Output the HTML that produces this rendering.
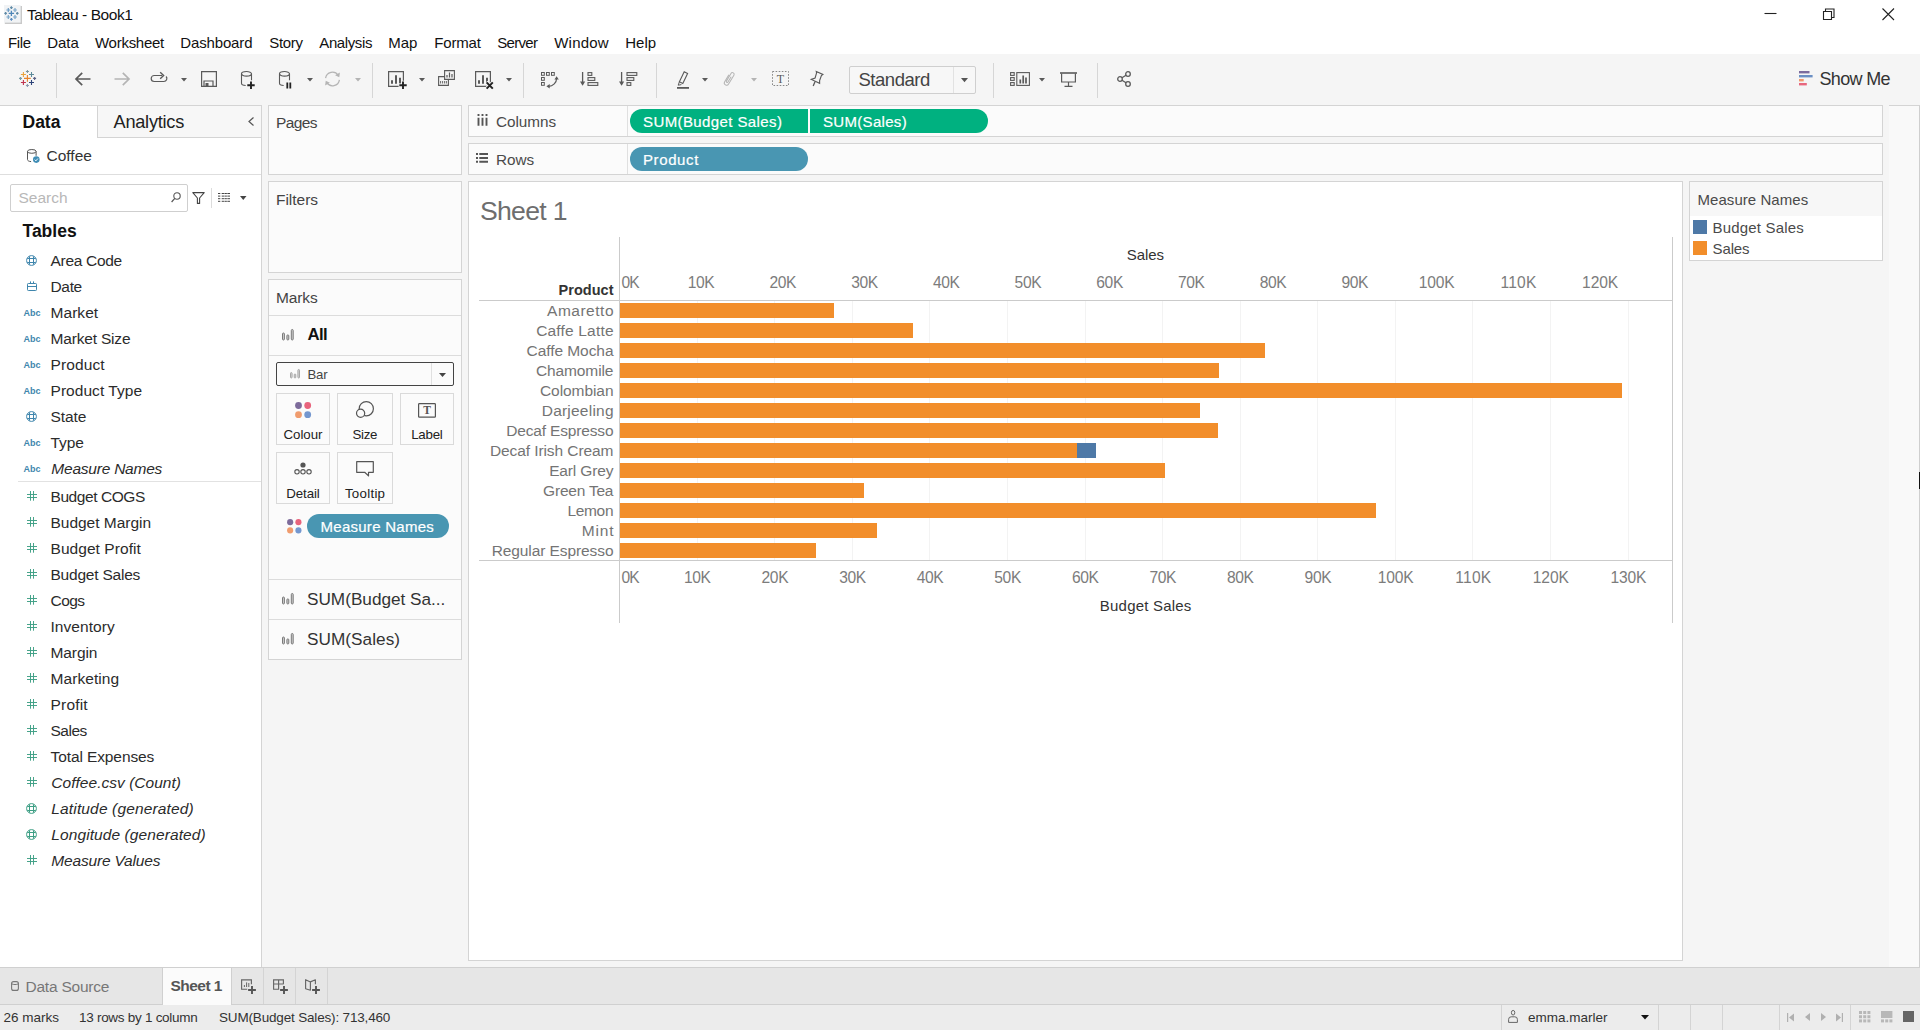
<!DOCTYPE html>
<html lang="en"><head><meta charset="utf-8"><title>Tableau - Book1</title>
<style>
*{box-sizing:border-box;margin:0;padding:0}
html,body{width:1920px;height:1030px;overflow:hidden}
body{position:relative;background:#f5f5f5;font-family:"Liberation Sans",sans-serif;color:#333}
.t{position:absolute;white-space:nowrap}
.b{position:absolute;display:block}
svg{overflow:visible}
</style></head><body>
<div class="b" style="left:0px;top:0px;width:1920px;height:54px;background:#fff;"></div>
<svg class="b" style="left:4px;top:5px;" width="19" height="19" viewBox="0 0 19 19"><rect x="0.8" y="1" width="17.2" height="18" fill="#c9c9c9"/><rect x="0" y="0" width="16.6" height="17.6" fill="#f1f3f5"/><path d="M4.7 8.4h5.4M7.4 5.7v5.4" stroke="#4f86b8" stroke-width="1.3"/><path d="M6.1 2.6h2.6M7.4 1.3v2.6" stroke="#5f8aa6" stroke-width="1.2"/><path d="M6.1 14.4h2.6M7.4 13.1v2.6" stroke="#5a8cc0" stroke-width="1.2"/><path d="M0.3 8.4h2.6M1.6 7.1v2.6" stroke="#5f8aa6" stroke-width="1.2"/><path d="M12.0 8.4h2.6M13.3 7.1v2.6" stroke="#5f8aa6" stroke-width="1.2"/><path d="M2.4 5h3.8M4.3 3.1v3.8" stroke="#6c9cc4" stroke-width="1.2"/><path d="M9.1 5h3.8M11 3.1v3.8" stroke="#7aa6c8" stroke-width="1.2"/><path d="M2.4 12h3.8M4.3 10.1v3.8" stroke="#7aa6c8" stroke-width="1.2"/><path d="M9.1 12h3.8M11 10.1v3.8" stroke="#7aa6c8" stroke-width="1.2"/></svg>
<div class="t" style="top:5px;line-height:20px;font-size:15.5px;color:#111;letter-spacing:-0.44px;left:27px;">Tableau - Book1</div>
<svg class="b" style="left:1764px;top:6px;" width="16" height="16" viewBox="0 0 16 16"><path d="M0.5 7.5h12" stroke="#222" stroke-width="1.1" fill="none"/></svg>
<svg class="b" style="left:1823px;top:8px;" width="14" height="14" viewBox="0 0 14 14"><path d="M0.5 3.5h8v8h-8z M2.5 3.5v-2.5h8.5v8.5h-2.5" stroke="#222" stroke-width="1.1" fill="none"/></svg>
<svg class="b" style="left:1882px;top:8px;" width="14" height="14" viewBox="0 0 14 14"><path d="M0.5 0.5l11.5 11.5M12 0.5l-11.5 11.5" stroke="#222" stroke-width="1.1" fill="none"/></svg>
<div class="t" style="top:33px;line-height:20px;font-size:15px;color:#111;letter-spacing:-0.37px;left:8px;">File</div>
<div class="t" style="top:33px;line-height:20px;font-size:15px;color:#111;letter-spacing:-0.07px;left:47.3px;">Data</div>
<div class="t" style="top:33px;line-height:20px;font-size:15px;color:#111;letter-spacing:-0.27px;left:95px;">Worksheet</div>
<div class="t" style="top:33px;line-height:20px;font-size:15px;color:#111;letter-spacing:-0.15px;left:180.3px;">Dashboard</div>
<div class="t" style="top:33px;line-height:20px;font-size:15px;color:#111;letter-spacing:-0.32px;left:269.3px;">Story</div>
<div class="t" style="top:33px;line-height:20px;font-size:15px;color:#111;letter-spacing:-0.39px;left:319.3px;">Analysis</div>
<div class="t" style="top:33px;line-height:20px;font-size:15px;color:#111;letter-spacing:-0.06px;left:388.3px;">Map</div>
<div class="t" style="top:33px;line-height:20px;font-size:15px;color:#111;letter-spacing:-0.19px;left:434.3px;">Format</div>
<div class="t" style="top:33px;line-height:20px;font-size:15px;color:#111;letter-spacing:-0.7px;left:497.3px;">Server</div>
<div class="t" style="top:33px;line-height:20px;font-size:15px;color:#111;letter-spacing:0.17px;left:554.3px;">Window</div>
<div class="t" style="top:33px;line-height:20px;font-size:15px;color:#111;letter-spacing:-0.04px;left:625.3px;">Help</div>
<div class="b" style="left:0px;top:54px;width:1920px;height:52px;background:#f5f5f5;"></div>
<div class="b" style="left:56px;top:63px;width:1px;height:35px;background:#d6d6d6;"></div>
<div class="b" style="left:372px;top:63px;width:1px;height:35px;background:#d6d6d6;"></div>
<div class="b" style="left:523px;top:63px;width:1px;height:35px;background:#d6d6d6;"></div>
<div class="b" style="left:656px;top:63px;width:1px;height:35px;background:#d6d6d6;"></div>
<div class="b" style="left:993px;top:63px;width:1px;height:35px;background:#d6d6d6;"></div>
<div class="b" style="left:1097px;top:63px;width:1px;height:35px;background:#d6d6d6;"></div>
<svg class="b" style="left:18px;top:69px;" width="19" height="19" viewBox="0 0 19 19"><path d="M6.0 9.4h6.8M9.4 6.0v6.8" stroke="#e8832a" stroke-width="1.1"/><path d="M2.9 5.5h5.0M5.4 3.0v5.0" stroke="#e9a23b" stroke-width="1.05"/><path d="M11.0 5.5h5.0M13.5 3.0v5.0" stroke="#5b8a99" stroke-width="1.05"/><path d="M2.9 13.5h5.0M5.4 11.0v5.0" stroke="#c0334d" stroke-width="1.1"/><path d="M11.0 13.5h5.0M13.5 11.0v5.0" stroke="#2d4379" stroke-width="1.1"/><path d="M7.9 2.5h3.0M9.4 1.0v3.0" stroke="#7a929a" stroke-width="1.0"/><path d="M7.9 16.5h3.0M9.4 15.0v3.0" stroke="#8a98ae" stroke-width="1.1"/><path d="M1.0 9.4h3.0M2.5 7.9v3.0" stroke="#7a9ca6" stroke-width="1.1"/><path d="M15.1 9.4h3.0M16.6 7.9v3.0" stroke="#5d6486" stroke-width="1.1"/></svg>
<svg class="b" style="left:75px;top:72px;" width="16" height="14" viewBox="0 0 16 14"><path d="M15.5 7H1.5M7.2 0.8L1 7l6.2 6.2" stroke="#5a5a5a" stroke-width="1.7" fill="none"/></svg>
<svg class="b" style="left:114px;top:72px;" width="16" height="14" viewBox="0 0 16 14"><path d="M0.5 7H14.5M8.8 0.8L15 7l-6.2 6.2" stroke="#b4b4b4" stroke-width="1.7" fill="none"/></svg>
<svg class="b" style="left:150px;top:72px;" width="18" height="10" viewBox="0 0 18 10"><path d="M12 3.5H4.2a3 3 0 0 0 0 6h9.6a3 3 0 0 0 2.3-5" stroke="#5a5a5a" stroke-width="1.2" fill="none"/><path d="M10.2 0.3L13.6 3.5l-3.4 3.2" stroke="#5a5a5a" stroke-width="1.4" fill="none"/></svg>
<svg class="b" style="left:180.5px;top:77.5px;" width="6" height="4" viewBox="0 0 6 4"><path d="M0 0h6l-3 3.6z" fill="#5a5a5a"/></svg>
<svg class="b" style="left:201px;top:71px;" width="16" height="16" viewBox="0 0 16 16"><path d="M0.6 0.6h14.8v14.8H0.6z" stroke="#5a5a5a" stroke-width="1.2" fill="none"/><path d="M3 15v-5h9v5" stroke="#5a5a5a" stroke-width="1.2" fill="none"/><rect x="4.5" y="12" width="3" height="3" fill="#5a5a5a"/></svg>
<svg class="b" style="left:241px;top:71px;" width="16" height="18" viewBox="0 0 16 18"><ellipse cx="5.5" cy="2.8" rx="5" ry="2.3" stroke="#5a5a5a" stroke-width="1.1" fill="none"/><path d="M0.5 2.8v9.4c0 1.3 2 2.2 4.2 2.3M10.5 2.8v6.5" stroke="#5a5a5a" stroke-width="1.1" fill="none"/><path d="M10 10.5v7.4M6.3 14.2h7.4" stroke="#222" stroke-width="1.9"/></svg>
<svg class="b" style="left:279px;top:71px;" width="16" height="18" viewBox="0 0 16 18"><ellipse cx="5.5" cy="2.8" rx="5" ry="2.3" stroke="#5a5a5a" stroke-width="1.1" fill="none"/><path d="M0.5 2.8v9.4c0 1.3 2 2.2 4.2 2.3M10.5 2.8v6.5" stroke="#5a5a5a" stroke-width="1.1" fill="none"/><path d="M8.3 11.6v6M11.3 11.6v6" stroke="#222" stroke-width="1.8"/></svg>
<svg class="b" style="left:306.5px;top:77.5px;" width="6" height="4" viewBox="0 0 6 4"><path d="M0 0h6l-3 3.6z" fill="#5a5a5a"/></svg>
<svg class="b" style="left:324px;top:70.5px;" width="17" height="16" viewBox="0 0 17 16"><path d="M1.6 7.2A6.9 6.9 0 0 1 14.2 4.4M15.4 8.8A6.9 6.9 0 0 1 2.8 11.6" stroke="#b4b4b4" stroke-width="1.25" fill="none"/><path d="M15.9 1.6l-0.6 4.6-4.2-2z" fill="#b4b4b4"/><path d="M1.1 14.4l0.6-4.6 4.2 2z" fill="#b4b4b4"/></svg>
<svg class="b" style="left:354.5px;top:77.5px;" width="6" height="4" viewBox="0 0 6 4"><path d="M0 0h6l-3 3.6z" fill="#b4b4b4"/></svg>
<svg class="b" style="left:388px;top:71px;" width="19" height="18" viewBox="0 0 19 18"><path d="M0.6 0.6h14.8v14.8H0.6z" stroke="#5a5a5a" stroke-width="1.2" fill="none"/><path d="M4 12.8v-3.6M8 12.8v-8.6M12 12.8v-6" stroke="#5a5a5a" stroke-width="2"/><path d="M15 9.8v8.8M10.6 14.2h8.8" stroke="#f5f5f5" stroke-width="3.6"/><path d="M15 10.5v7.4M11.3 14.2h7.4" stroke="#222" stroke-width="1.9"/></svg>
<svg class="b" style="left:418.5px;top:77.5px;" width="6" height="4" viewBox="0 0 6 4"><path d="M0 0h6l-3 3.6z" fill="#5a5a5a"/></svg>
<svg class="b" style="left:438px;top:70px;" width="17" height="16" viewBox="0 0 17 16"><path d="M6.6 0.6h9.8v8.8H6.6z" stroke="#5a5a5a" stroke-width="1.1" fill="#f5f5f5"/><path d="M9 7.5v-2.5M11.5 7.5v-5M14 7.5v-3.5" stroke="#5a5a5a" stroke-width="1.2"/><path d="M6.6 6.6H0.6v8.8h9.8V9.4" stroke="#5a5a5a" stroke-width="1.1" fill="none"/><path d="M2.6 13.5v-2.5M4.6 13.5v-2.5M6.6 13.5v-2.5M8.4 13.5v-2.5" stroke="#5a5a5a" stroke-width="0.9"/></svg>
<svg class="b" style="left:475px;top:71px;" width="19" height="18" viewBox="0 0 19 18"><path d="M0.6 0.6h14.8v14.8H0.6z" stroke="#5a5a5a" stroke-width="1.2" fill="none"/><path d="M4 12.8v-3.6M8 12.8v-8.6M12 12.8v-6" stroke="#5a5a5a" stroke-width="2"/><path d="M11.2 11l7 7M18.2 11l-7 7" stroke="#f5f5f5" stroke-width="3.8"/><path d="M11.6 11.4l6.2 6.2M17.8 11.4l-6.2 6.2" stroke="#222" stroke-width="2"/></svg>
<svg class="b" style="left:505.5px;top:77.5px;" width="6" height="4" viewBox="0 0 6 4"><path d="M0 0h6l-3 3.6z" fill="#5a5a5a"/></svg>
<svg class="b" style="left:540.5px;top:72px;" width="18" height="17" viewBox="0 0 18 17"><g stroke="#5a5a5a" stroke-width="1" fill="none"><rect x="0.5" y="0.5" width="2.8" height="2.8"/><rect x="5.5" y="0.5" width="2.8" height="2.8"/><rect x="10.5" y="0.5" width="2.8" height="2.8"/><rect x="0.5" y="5.5" width="2.8" height="2.8"/><rect x="0.5" y="10.5" width="2.8" height="2.8"/><path d="M15.6 6.5c0 4-3.5 7.6-8.2 7.8" stroke-width="1.2"/></g><path d="M15.6 4.2l2.2 3.4h-4.4z" fill="#5a5a5a"/><path d="M5.4 14.3l3.3-2.3v4.6z" fill="#5a5a5a"/></svg>
<svg class="b" style="left:580px;top:72px;" width="18" height="14" viewBox="0 0 18 14"><path d="M2.6 0v11" stroke="#5a5a5a" stroke-width="1.3"/><path d="M0 9.6h5.2l-2.6 4.2z" fill="#5a5a5a"/><g stroke="#5a5a5a" stroke-width="1.1" fill="none"><rect x="8" y="0.6" width="3.8" height="2.8"/><rect x="8" y="5.6" width="6.8" height="2.8"/><rect x="8" y="10.6" width="9.8" height="2.8"/></g></svg>
<svg class="b" style="left:619px;top:72px;" width="18" height="14" viewBox="0 0 18 14"><path d="M2.6 0v11" stroke="#5a5a5a" stroke-width="1.3"/><path d="M0 9.6h5.2l-2.6 4.2z" fill="#5a5a5a"/><g stroke="#5a5a5a" stroke-width="1.1" fill="none"><rect x="8" y="0.6" width="9.8" height="2.8"/><rect x="8" y="5.6" width="6.8" height="2.8"/><rect x="8" y="10.6" width="3.8" height="2.8"/></g></svg>
<svg class="b" style="left:677px;top:71px;" width="12" height="18" viewBox="0 0 12 18"><path d="M7.2 0.8l3.4 1.6-4.8 10-3.4-1.6z" stroke="#5a5a5a" stroke-width="1.1" fill="none"/><path d="M2.4 10.8l-1.2 3.4 3.2-0.6" stroke="#5a5a5a" stroke-width="1" fill="none"/><path d="M0 16.9h12" stroke="#5a5a5a" stroke-width="1.8"/></svg>
<svg class="b" style="left:701.5px;top:77.5px;" width="6" height="4" viewBox="0 0 6 4"><path d="M0 0h6l-3 3.6z" fill="#5a5a5a"/></svg>
<svg class="b" style="left:722px;top:71px;" width="14" height="16" viewBox="0 0 14 16"><g transform="translate(7.2,7.6) rotate(31)"><path d="M-2.3 -3.2V5A2.3 2.3 0 0 0 2.3 5V-5.3A1.7 1.7 0 0 0 -1.1 -5.3V3.6A0.9 0.9 0 0 0 0.7 3.6V-2.6" stroke="#b4b4b4" stroke-width="1" fill="none"/></g></svg>
<svg class="b" style="left:750.5px;top:77.5px;" width="6" height="4" viewBox="0 0 6 4"><path d="M0 0h6l-3 3.6z" fill="#b4b4b4"/></svg>
<svg class="b" style="left:772px;top:71px;" width="17" height="15" viewBox="0 0 17 15"><rect x="0.5" y="0.5" width="16" height="14" stroke="#888" stroke-width="1" stroke-dasharray="1.6 1.5" fill="none"/><text x="8.5" y="12" font-family="Liberation Serif,serif" font-size="12" text-anchor="middle" fill="#5a5a5a">T</text></svg>
<svg class="b" style="left:811px;top:71px;" width="12" height="15" viewBox="0 0 12 15"><path d="M5.3 0.5L11.9 3.4L10.4 4.6L8.6 9.6L8.6 12.3L0.3 8.4L4.1 7L5.6 1.8Z" stroke="#5a5a5a" stroke-width="1.15" fill="none" stroke-linejoin="miter"/><path d="M4.1 10.4L2.2 15" stroke="#5a5a5a" stroke-width="1.3"/></svg>
<div class="b" style="left:849px;top:66px;width:127px;height:28px;background:#f7f7f7;border:1px solid #cfcfcf;border-radius:2px;"></div>
<div class="b" style="left:953px;top:67px;width:1px;height:26px;background:#e2e2e2;"></div>
<div class="t" style="top:69.5px;line-height:20px;font-size:18.5px;color:#444;letter-spacing:-0.47px;left:858.5px;">Standard</div>
<svg class="b" style="left:961px;top:78px;" width="7" height="4.5" viewBox="0 0 7 4.5"><path d="M0 0h7l-3.5 4.2z" fill="#555"/></svg>
<svg class="b" style="left:1010px;top:72px;" width="20" height="14" viewBox="0 0 20 14"><g stroke="#5a5a5a" stroke-width="1.1" fill="none"><rect x="0.6" y="0.6" width="3.6" height="2.8"/><rect x="0.6" y="5.6" width="3.6" height="2.8"/><rect x="0.6" y="10.6" width="3.6" height="2.8"/><rect x="6.8" y="0.6" width="12.6" height="12.8"/></g><path d="M10.3 11.5v-4M13.2 11.5v-8M16 11.5v-6" stroke="#5a5a5a" stroke-width="1.7"/></svg>
<svg class="b" style="left:1038.5px;top:77.5px;" width="6" height="4" viewBox="0 0 6 4"><path d="M0 0h6l-3 3.6z" fill="#5a5a5a"/></svg>
<svg class="b" style="left:1060px;top:71.5px;" width="17" height="15" viewBox="0 0 17 15"><path d="M0 1h17" stroke="#5a5a5a" stroke-width="1.6"/><path d="M1.6 1.6v8.4h13.8V1.6" stroke="#5a5a5a" stroke-width="1.2" fill="none"/><path d="M8.5 10v4M4.5 14.4h8" stroke="#5a5a5a" stroke-width="1.2"/></svg>
<svg class="b" style="left:1117px;top:71px;" width="14" height="16" viewBox="0 0 14 16"><g stroke="#5a5a5a" stroke-width="1.3" fill="none"><circle cx="11" cy="3" r="2.3"/><circle cx="3" cy="8" r="2.3"/><circle cx="11" cy="13" r="2.3"/><path d="M5 6.8l4-2.5M5 9.2l4 2.5"/></g></svg>
<svg class="b" style="left:1799px;top:71.3px;" width="15" height="15" viewBox="0 0 15 15"><rect x="0" y="0" width="10.5" height="2.4" fill="#7b6b9e"/><rect x="0" y="4" width="13.6" height="2.4" fill="#6b8fc4"/><rect x="0" y="8" width="4.7" height="2.4" fill="#f0986c"/><rect x="0" y="12" width="7.8" height="2.4" fill="#e8677e"/></svg>
<div class="t" style="top:69px;line-height:20px;font-size:18px;color:#333;letter-spacing:-0.68px;left:1819.5px;">Show Me</div>
<div class="b" style="left:0px;top:105px;width:262px;height:862px;background:#fff;border-top:1px solid #d4d4d4;border-right:1px solid #d4d4d4;"></div>
<div class="b" style="left:97px;top:105px;width:164px;height:33px;background:#f7f7f7;border:1px solid #d4d4d4;border-right:none;"></div>
<div class="t" style="top:112px;line-height:20px;font-size:17.5px;color:#111;font-weight:bold;left:22.5px;">Data</div>
<div class="t" style="top:112px;line-height:20px;font-size:18.2px;color:#222;letter-spacing:-0.25px;left:113.5px;">Analytics</div>
<svg class="b" style="left:248px;top:116.5px;" width="6" height="9" viewBox="0 0 6 9"><path d="M5.5 0.5L1 4.5l4.5 4" stroke="#555" stroke-width="1.2" fill="none"/></svg>
<svg class="b" style="left:27px;top:148.5px;" width="13" height="14" viewBox="0 0 13 14"><ellipse cx="4.8" cy="2.4" rx="4.3" ry="1.9" stroke="#555" stroke-width="1" fill="none"/><path d="M0.5 2.4v8.2c0 1.1 1.6 1.9 3.6 2M9.1 2.4v4.4" stroke="#555" stroke-width="1" fill="none"/><circle cx="9.3" cy="10.6" r="3.3" fill="#3f8db5"/><path d="M7.7 10.6l1.2 1.3 2-2.4" stroke="#fff" stroke-width="0.9" fill="none"/></svg>
<div class="t" style="top:145.5px;line-height:20px;font-size:15.5px;color:#333;left:46.5px;">Coffee</div>
<div class="b" style="left:0px;top:174px;width:261px;height:1px;background:#dedede;"></div>
<div class="b" style="left:10px;top:184px;width:178px;height:28px;background:#fff;border:1px solid #cfcfcf;border-radius:2px;"></div>
<div class="t" style="top:188px;line-height:20px;font-size:15.5px;color:#b8b8b8;left:18.5px;">Search</div>
<svg class="b" style="left:170.5px;top:191.5px;" width="10" height="11" viewBox="0 0 10 11"><circle cx="6" cy="4" r="3.2" stroke="#555" stroke-width="1.1" fill="none"/><path d="M3.8 6.4L0.6 10" stroke="#555" stroke-width="1.2"/></svg>
<svg class="b" style="left:192px;top:192px;" width="13" height="12" viewBox="0 0 13 12"><path d="M0.8 0.6h11.4L7.6 6v5.4H5.4V6z" stroke="#444" stroke-width="1.1" fill="none" stroke-linejoin="round"/></svg>
<div class="b" style="left:211px;top:188px;width:1px;height:20px;background:#dcdcdc;"></div>
<svg class="b" style="left:218px;top:193px;" width="12" height="9" viewBox="0 0 12 9"><path d="M0 0.5h2.4M3.6 0.5h8.4M0 3.1h2.4M3.6 3.1h8.4M0 5.7h2.4M3.6 5.7h8.4M0 8.3h2.4M3.6 8.3h8.4" stroke="#444" stroke-width="1"/><path d="M3 0v9M6.4 0v9M9.2 0v9" stroke="#fff" stroke-width="0.5"/></svg>
<svg class="b" style="left:239.5px;top:196px;" width="6.5" height="4" viewBox="0 0 6.5 4"><path d="M0 0h6.5l-3.25 4z" fill="#444"/></svg>
<div class="t" style="top:221px;line-height:20px;font-size:17.5px;color:#111;font-weight:bold;left:22.5px;">Tables</div>
<svg class="b" style="left:26px;top:255px;" width="11" height="11" viewBox="0 0 11 11"><g stroke="#3f86ad" stroke-width="1" fill="none"><circle cx="5.5" cy="5.5" r="4.9"/><path d="M3.5 1.3v8.4M7.5 1.3v8.4M1.2 3.5h8.6M1.2 7.5h8.6"/></g></svg>
<div class="t" style="top:251px;line-height:20px;font-size:15.5px;color:#2b2b2b;letter-spacing:-0.31px;left:50.5px;">Area Code</div>
<svg class="b" style="left:27px;top:281px;" width="10" height="10" viewBox="0 0 10 10"><g stroke="#3f86ad" stroke-width="1" fill="none"><rect x="0.5" y="2.5" width="9" height="7" rx="0.8"/><path d="M0.5 5.5h9M3.5 0.4v2.6M6.5 0.4v2.6"/></g></svg>
<div class="t" style="top:277px;line-height:20px;font-size:15.5px;color:#2b2b2b;letter-spacing:-0.34px;left:50.5px;">Date</div>
<div class="t" style="top:302.5px;line-height:20px;font-size:9px;color:#3f86ad;font-weight:bold;left:-168px;width:400px;text-align:center;">Abc</div>
<div class="t" style="top:303px;line-height:20px;font-size:15.5px;color:#2b2b2b;letter-spacing:0.05px;left:50.5px;">Market</div>
<div class="t" style="top:328.5px;line-height:20px;font-size:9px;color:#3f86ad;font-weight:bold;left:-168px;width:400px;text-align:center;">Abc</div>
<div class="t" style="top:329px;line-height:20px;font-size:15.5px;color:#2b2b2b;letter-spacing:-0.18px;left:50.5px;">Market Size</div>
<div class="t" style="top:354.5px;line-height:20px;font-size:9px;color:#3f86ad;font-weight:bold;left:-168px;width:400px;text-align:center;">Abc</div>
<div class="t" style="top:355px;line-height:20px;font-size:15.5px;color:#2b2b2b;letter-spacing:0.11px;left:50.5px;">Product</div>
<div class="t" style="top:380.5px;line-height:20px;font-size:9px;color:#3f86ad;font-weight:bold;left:-168px;width:400px;text-align:center;">Abc</div>
<div class="t" style="top:381px;line-height:20px;font-size:15.5px;color:#2b2b2b;letter-spacing:0.05px;left:50.5px;">Product Type</div>
<svg class="b" style="left:26px;top:411px;" width="11" height="11" viewBox="0 0 11 11"><g stroke="#3f86ad" stroke-width="1" fill="none"><circle cx="5.5" cy="5.5" r="4.9"/><path d="M3.5 1.3v8.4M7.5 1.3v8.4M1.2 3.5h8.6M1.2 7.5h8.6"/></g></svg>
<div class="t" style="top:407px;line-height:20px;font-size:15.5px;color:#2b2b2b;letter-spacing:-0.06px;left:50.5px;">State</div>
<div class="t" style="top:432.5px;line-height:20px;font-size:9px;color:#3f86ad;font-weight:bold;left:-168px;width:400px;text-align:center;">Abc</div>
<div class="t" style="top:433px;line-height:20px;font-size:15.5px;color:#2b2b2b;letter-spacing:-0.08px;left:50.5px;">Type</div>
<div class="t" style="top:458.5px;line-height:20px;font-size:9px;color:#3f86ad;font-weight:bold;left:-168px;width:400px;text-align:center;">Abc</div>
<div class="t" style="top:459px;line-height:20px;font-size:15.5px;color:#2b2b2b;font-style:italic;letter-spacing:-0.22px;left:51.3px;">Measure Names</div>
<div class="b" style="left:18px;top:481px;width:243px;height:1px;background:#e2e2e2;"></div>
<svg class="b" style="left:27px;top:491px;" width="10" height="10" viewBox="0 0 10 10"><path d="M3.5 0v9.7M6.5 0v9.7M0 3.5h10M0 6.5h10" stroke="#3e9f85" stroke-width="0.95"/></svg>
<div class="t" style="top:487px;line-height:20px;font-size:15.5px;color:#2b2b2b;letter-spacing:-0.43px;left:50.5px;">Budget COGS</div>
<svg class="b" style="left:27px;top:517px;" width="10" height="10" viewBox="0 0 10 10"><path d="M3.5 0v9.7M6.5 0v9.7M0 3.5h10M0 6.5h10" stroke="#3e9f85" stroke-width="0.95"/></svg>
<div class="t" style="top:513px;line-height:20px;font-size:15.5px;color:#2b2b2b;letter-spacing:-0.02px;left:50.5px;">Budget Margin</div>
<svg class="b" style="left:27px;top:543px;" width="10" height="10" viewBox="0 0 10 10"><path d="M3.5 0v9.7M6.5 0v9.7M0 3.5h10M0 6.5h10" stroke="#3e9f85" stroke-width="0.95"/></svg>
<div class="t" style="top:539px;line-height:20px;font-size:15.5px;color:#2b2b2b;letter-spacing:0.06px;left:50.5px;">Budget Profit</div>
<svg class="b" style="left:27px;top:569px;" width="10" height="10" viewBox="0 0 10 10"><path d="M3.5 0v9.7M6.5 0v9.7M0 3.5h10M0 6.5h10" stroke="#3e9f85" stroke-width="0.95"/></svg>
<div class="t" style="top:565px;line-height:20px;font-size:15.5px;color:#2b2b2b;letter-spacing:-0.22px;left:50.5px;">Budget Sales</div>
<svg class="b" style="left:27px;top:595px;" width="10" height="10" viewBox="0 0 10 10"><path d="M3.5 0v9.7M6.5 0v9.7M0 3.5h10M0 6.5h10" stroke="#3e9f85" stroke-width="0.95"/></svg>
<div class="t" style="top:591px;line-height:20px;font-size:15.5px;color:#2b2b2b;letter-spacing:-0.52px;left:50.5px;">Cogs</div>
<svg class="b" style="left:27px;top:621px;" width="10" height="10" viewBox="0 0 10 10"><path d="M3.5 0v9.7M6.5 0v9.7M0 3.5h10M0 6.5h10" stroke="#3e9f85" stroke-width="0.95"/></svg>
<div class="t" style="top:617px;line-height:20px;font-size:15.5px;color:#2b2b2b;letter-spacing:0.05px;left:50.5px;">Inventory</div>
<svg class="b" style="left:27px;top:647px;" width="10" height="10" viewBox="0 0 10 10"><path d="M3.5 0v9.7M6.5 0v9.7M0 3.5h10M0 6.5h10" stroke="#3e9f85" stroke-width="0.95"/></svg>
<div class="t" style="top:643px;line-height:20px;font-size:15.5px;color:#2b2b2b;letter-spacing:-0.08px;left:50.5px;">Margin</div>
<svg class="b" style="left:27px;top:673px;" width="10" height="10" viewBox="0 0 10 10"><path d="M3.5 0v9.7M6.5 0v9.7M0 3.5h10M0 6.5h10" stroke="#3e9f85" stroke-width="0.95"/></svg>
<div class="t" style="top:669px;line-height:20px;font-size:15.5px;color:#2b2b2b;letter-spacing:0.07px;left:50.5px;">Marketing</div>
<svg class="b" style="left:27px;top:699px;" width="10" height="10" viewBox="0 0 10 10"><path d="M3.5 0v9.7M6.5 0v9.7M0 3.5h10M0 6.5h10" stroke="#3e9f85" stroke-width="0.95"/></svg>
<div class="t" style="top:695px;line-height:20px;font-size:15.5px;color:#2b2b2b;letter-spacing:0.19px;left:50.5px;">Profit</div>
<svg class="b" style="left:27px;top:725px;" width="10" height="10" viewBox="0 0 10 10"><path d="M3.5 0v9.7M6.5 0v9.7M0 3.5h10M0 6.5h10" stroke="#3e9f85" stroke-width="0.95"/></svg>
<div class="t" style="top:721px;line-height:20px;font-size:15.5px;color:#2b2b2b;letter-spacing:-0.5px;left:50.5px;">Sales</div>
<svg class="b" style="left:27px;top:751px;" width="10" height="10" viewBox="0 0 10 10"><path d="M3.5 0v9.7M6.5 0v9.7M0 3.5h10M0 6.5h10" stroke="#3e9f85" stroke-width="0.95"/></svg>
<div class="t" style="top:747px;line-height:20px;font-size:15.5px;color:#2b2b2b;letter-spacing:-0.1px;left:50.5px;">Total Expenses</div>
<svg class="b" style="left:27px;top:777px;" width="10" height="10" viewBox="0 0 10 10"><path d="M3.5 0v9.7M6.5 0v9.7M0 3.5h10M0 6.5h10" stroke="#3e9f85" stroke-width="0.95"/></svg>
<div class="t" style="top:773px;line-height:20px;font-size:15.5px;color:#2b2b2b;font-style:italic;letter-spacing:0.03px;left:51.3px;">Coffee.csv (Count)</div>
<svg class="b" style="left:26px;top:803px;" width="11" height="11" viewBox="0 0 11 11"><g stroke="#3e9f85" stroke-width="1" fill="none"><circle cx="5.5" cy="5.5" r="4.9"/><path d="M3.5 1.3v8.4M7.5 1.3v8.4M1.2 3.5h8.6M1.2 7.5h8.6"/></g></svg>
<div class="t" style="top:799px;line-height:20px;font-size:15.5px;color:#2b2b2b;font-style:italic;letter-spacing:0.15px;left:51.3px;">Latitude (generated)</div>
<svg class="b" style="left:26px;top:829px;" width="11" height="11" viewBox="0 0 11 11"><g stroke="#3e9f85" stroke-width="1" fill="none"><circle cx="5.5" cy="5.5" r="4.9"/><path d="M3.5 1.3v8.4M7.5 1.3v8.4M1.2 3.5h8.6M1.2 7.5h8.6"/></g></svg>
<div class="t" style="top:825px;line-height:20px;font-size:15.5px;color:#2b2b2b;font-style:italic;letter-spacing:0.09px;left:51.3px;">Longitude (generated)</div>
<svg class="b" style="left:27px;top:855px;" width="10" height="10" viewBox="0 0 10 10"><path d="M3.5 0v9.7M6.5 0v9.7M0 3.5h10M0 6.5h10" stroke="#3e9f85" stroke-width="0.95"/></svg>
<div class="t" style="top:851px;line-height:20px;font-size:15.5px;color:#2b2b2b;font-style:italic;letter-spacing:-0.18px;left:51.3px;">Measure Values</div>
<div class="b" style="left:262px;top:106px;width:1658px;height:861px;background:#f5f5f5;"></div>
<div class="b" style="left:1889px;top:105px;width:31px;height:862px;background:#f9f9f9;border-top:1px solid #d4d4d4;border-right:1px solid #cfcfcf;"></div>
<div class="b" style="left:268px;top:105px;width:194px;height:70px;background:#fbfbfb;border:1px solid #d4d4d4;"></div>
<div class="t" style="top:113px;line-height:20px;font-size:15.5px;color:#444;letter-spacing:-0.61px;left:276px;">Pages</div>
<div class="b" style="left:268px;top:181px;width:194px;height:92px;background:#fbfbfb;border:1px solid #d4d4d4;"></div>
<div class="t" style="top:189.5px;line-height:20px;font-size:15.5px;color:#444;letter-spacing:-0.03px;left:276px;">Filters</div>
<div class="b" style="left:268px;top:279px;width:194px;height:381px;background:#fbfbfb;border:1px solid #d4d4d4;"></div>
<div class="t" style="top:287.5px;line-height:20px;font-size:15.5px;color:#444;letter-spacing:-0.14px;left:276px;">Marks</div>
<div class="b" style="left:269px;top:315px;width:192px;height:1px;background:#dcdcdc;"></div>
<svg class="b" style="left:282px;top:329px;" width="12" height="11.5" viewBox="0 0 12 11.5"><g stroke="#7a7a7a" stroke-width="1" fill="#cfcfcf"><rect x="0.5" y="4" width="1.9" height="7" rx="0.95"/><rect x="4.9" y="5.9" width="1.9" height="5.1" rx="0.95"/><rect x="9.3" y="0.5" width="1.9" height="10.5" rx="0.95"/></g></svg>
<div class="t" style="top:325px;line-height:20px;font-size:16.8px;color:#111;font-weight:bold;letter-spacing:-0.62px;left:307.5px;">All</div>
<div class="b" style="left:269px;top:355px;width:192px;height:1px;background:#dcdcdc;"></div>
<div class="b" style="left:276px;top:362px;width:178px;height:24px;background:#fbfbfb;border:1px solid #444;border-radius:2px;"></div>
<svg class="b" style="left:290px;top:369px;" width="10" height="9.5" viewBox="0 0 10 9.5"><g stroke="#a0a0a0" stroke-width="0.9" fill="#d8d8d8"><rect x="0.5" y="3.6" width="1.6" height="5.4" rx="0.8"/><rect x="4.2" y="5" width="1.6" height="4" rx="0.8"/><rect x="7.9" y="0.5" width="1.6" height="8.5" rx="0.8"/></g></svg>
<div class="t" style="top:364.5px;line-height:20px;font-size:13.2px;color:#444;letter-spacing:-0.24px;left:307.5px;">Bar</div>
<div class="b" style="left:431px;top:363px;width:1px;height:22px;background:#e0e0e0;"></div>
<svg class="b" style="left:438.5px;top:372.5px;" width="7" height="4" viewBox="0 0 7 4"><path d="M0 0h7l-3.5 4z" fill="#444"/></svg>
<div class="b" style="left:276px;top:393px;width:54px;height:52px;background:#fbfbfb;border:1px solid #dadada;"></div>
<div class="t" style="top:424.5px;line-height:20px;font-size:13.3px;color:#222;letter-spacing:-0.01px;left:102.99px;width:400px;text-align:center;">Colour</div>
<div class="b" style="left:337px;top:393px;width:56px;height:52px;background:#fbfbfb;border:1px solid #dadada;"></div>
<div class="t" style="top:424.5px;line-height:20px;font-size:13.3px;color:#222;letter-spacing:-0.29px;left:164.85px;width:400px;text-align:center;">Size</div>
<div class="b" style="left:400px;top:393px;width:54px;height:52px;background:#fbfbfb;border:1px solid #dadada;"></div>
<div class="t" style="top:424.5px;line-height:20px;font-size:13.3px;color:#222;letter-spacing:-0.25px;left:226.88px;width:400px;text-align:center;">Label</div>
<div class="b" style="left:276px;top:452px;width:54px;height:52px;background:#fbfbfb;border:1px solid #dadada;"></div>
<div class="t" style="top:483.5px;line-height:20px;font-size:13.3px;color:#222;letter-spacing:-0.12px;left:102.94px;width:400px;text-align:center;">Detail</div>
<div class="b" style="left:337px;top:452px;width:56px;height:52px;background:#fbfbfb;border:1px solid #dadada;"></div>
<div class="t" style="top:483.5px;line-height:20px;font-size:13.3px;color:#222;letter-spacing:0.27px;left:165.13px;width:400px;text-align:center;">Tooltip</div>
<svg class="b" style="left:294.9px;top:401.8px;" width="16.2" height="16.2" viewBox="0 0 16.2 16.2"><circle cx="3.5" cy="3.5" r="3.4" fill="#7d6b9b"/><circle cx="12.7" cy="3.5" r="3.4" fill="#e8637c"/><circle cx="3.5" cy="12.7" r="3.4" fill="#f09c6e"/><circle cx="12.7" cy="12.7" r="3.4" fill="#7497cf"/></svg>
<svg class="b" style="left:356px;top:401px;" width="18" height="17.5" viewBox="0 0 18 17.5"><g stroke="#555" stroke-width="1.2" fill="none"><circle cx="10.3" cy="7.7" r="7.1"/><circle cx="4.6" cy="12.3" r="4.1" fill="#fbfbfb"/></g></svg>
<svg class="b" style="left:418px;top:402.5px;" width="18" height="15" viewBox="0 0 18 15"><rect x="0.6" y="0.6" width="16.8" height="13.6" rx="0.8" stroke="#555" stroke-width="1.2" fill="none"/><text x="9" y="11.4" font-family="Liberation Serif,serif" font-weight="bold" font-size="11.5" text-anchor="middle" fill="#555">T</text></svg>
<svg class="b" style="left:293.5px;top:461.5px;" width="18" height="13" viewBox="0 0 18 13"><circle cx="9" cy="3" r="2.6" fill="#555"/><g stroke="#555" stroke-width="1.1" fill="none"><circle cx="3" cy="9.8" r="2.2"/><circle cx="9" cy="9.8" r="2.2"/><circle cx="15" cy="9.8" r="2.2"/></g></svg>
<svg class="b" style="left:356px;top:460.5px;" width="18" height="16" viewBox="0 0 18 16"><path d="M0.7 0.7h16.6v10.6H12.5v3.6l-3.8-3.6H0.7z" stroke="#555" stroke-width="1.2" fill="none" stroke-linejoin="round"/></svg>
<svg class="b" style="left:286.8px;top:519.2px;" width="14.58" height="14.58" viewBox="0 0 16.2 16.2"><circle cx="3.5" cy="3.5" r="3.4" fill="#7d6b9b"/><circle cx="12.7" cy="3.5" r="3.4" fill="#e8637c"/><circle cx="3.5" cy="12.7" r="3.4" fill="#f09c6e"/><circle cx="12.7" cy="12.7" r="3.4" fill="#7497cf"/></svg>
<div class="b" style="left:307px;top:514px;width:142px;height:24px;background:#4996b2;border-radius:12px;"></div>
<div class="t" style="top:516.5px;line-height:20px;font-size:15px;color:#fff;letter-spacing:0.27px;left:320.5px;-webkit-text-stroke:0.2px #fff;">Measure Names</div>
<div class="b" style="left:269px;top:579px;width:192px;height:1px;background:#dcdcdc;"></div>
<svg class="b" style="left:282px;top:593px;" width="12" height="11.5" viewBox="0 0 12 11.5"><g stroke="#7a7a7a" stroke-width="1" fill="#cfcfcf"><rect x="0.5" y="4" width="1.9" height="7" rx="0.95"/><rect x="4.9" y="5.9" width="1.9" height="5.1" rx="0.95"/><rect x="9.3" y="0.5" width="1.9" height="10.5" rx="0.95"/></g></svg>
<div class="t" style="top:589.4px;line-height:20px;font-size:17.2px;color:#333;letter-spacing:-0.01px;left:307px;">SUM(Budget Sa...</div>
<div class="b" style="left:269px;top:619px;width:192px;height:1px;background:#dcdcdc;"></div>
<svg class="b" style="left:282px;top:633px;" width="12" height="11.5" viewBox="0 0 12 11.5"><g stroke="#7a7a7a" stroke-width="1" fill="#cfcfcf"><rect x="0.5" y="4" width="1.9" height="7" rx="0.95"/><rect x="4.9" y="5.9" width="1.9" height="5.1" rx="0.95"/><rect x="9.3" y="0.5" width="1.9" height="10.5" rx="0.95"/></g></svg>
<div class="t" style="top:628.9px;line-height:20px;font-size:17.2px;color:#333;letter-spacing:0.04px;left:307px;">SUM(Sales)</div>
<div class="b" style="left:468px;top:105px;width:1415px;height:32px;background:#fbfbfb;border:1px solid #d4d4d4;"></div>
<div class="b" style="left:468px;top:143px;width:1415px;height:32px;background:#fbfbfb;border:1px solid #d4d4d4;"></div>
<div class="b" style="left:627px;top:106px;width:1px;height:30px;background:#e0e0e0;"></div>
<div class="b" style="left:627px;top:144px;width:1px;height:30px;background:#e0e0e0;"></div>
<svg class="b" style="left:476.5px;top:114.3px;" width="11" height="12" viewBox="0 0 11 12"><path d="M1.5 0v2.1M5.5 0v2.1M9.5 0v2.1M1.5 3.7v8M5.5 3.7v8M9.5 3.7v8" stroke="#555" stroke-width="1.9"/></svg>
<div class="t" style="top:111.5px;line-height:20px;font-size:15.3px;color:#4a4a4a;letter-spacing:-0.05px;left:496px;">Columns</div>
<svg class="b" style="left:476px;top:153.4px;" width="12" height="10" viewBox="0 0 12 10"><path d="M0 1.1h2M3.3 1.1h8.7M0 4.9h2M3.3 4.9h8.7M0 8.7h2M3.3 8.7h8.7" stroke="#555" stroke-width="2"/></svg>
<div class="t" style="top:149.5px;line-height:20px;font-size:15.3px;color:#4a4a4a;left:496px;">Rows</div>
<div class="b" style="left:629.5px;top:109px;width:178px;height:24px;background:#00b180;border-radius:12px 0 0 12px;"></div>
<div class="t" style="top:111.5px;line-height:20px;font-size:15px;color:#fff;letter-spacing:0.4px;left:643px;-webkit-text-stroke:0.2px #fff;">SUM(Budget Sales)</div>
<div class="b" style="left:809.5px;top:109px;width:178.5px;height:24px;background:#00b180;border-radius:0 12px 12px 0;"></div>
<div class="t" style="top:111.5px;line-height:20px;font-size:15px;color:#fff;letter-spacing:0.31px;left:823px;-webkit-text-stroke:0.2px #fff;">SUM(Sales)</div>
<div class="b" style="left:629.5px;top:147px;width:178px;height:24px;background:#4996b2;border-radius:12px;"></div>
<div class="t" style="top:149.5px;line-height:20px;font-size:15px;color:#fff;letter-spacing:0.61px;left:643px;-webkit-text-stroke:0.2px #fff;">Product</div>
<div class="b" style="left:468px;top:181px;width:1215px;height:780px;background:#fff;border:1px solid #d4d4d4;"></div>
<div class="t" style="top:200.5px;line-height:20px;font-size:26.6px;color:#6e6e6e;letter-spacing:-0.71px;left:480px;">Sheet 1</div>
<div class="b" style="left:697px;top:301px;width:1px;height:259px;background:#f3f3f3;"></div>
<div class="b" style="left:774px;top:301px;width:1px;height:259px;background:#f3f3f3;"></div>
<div class="b" style="left:852px;top:301px;width:1px;height:259px;background:#f3f3f3;"></div>
<div class="b" style="left:929px;top:301px;width:1px;height:259px;background:#f3f3f3;"></div>
<div class="b" style="left:1007px;top:301px;width:1px;height:259px;background:#f3f3f3;"></div>
<div class="b" style="left:1085px;top:301px;width:1px;height:259px;background:#f3f3f3;"></div>
<div class="b" style="left:1162px;top:301px;width:1px;height:259px;background:#f3f3f3;"></div>
<div class="b" style="left:1240px;top:301px;width:1px;height:259px;background:#f3f3f3;"></div>
<div class="b" style="left:1317px;top:301px;width:1px;height:259px;background:#f3f3f3;"></div>
<div class="b" style="left:1395px;top:301px;width:1px;height:259px;background:#f3f3f3;"></div>
<div class="b" style="left:1472px;top:301px;width:1px;height:259px;background:#f3f3f3;"></div>
<div class="b" style="left:1550px;top:301px;width:1px;height:259px;background:#f3f3f3;"></div>
<div class="b" style="left:1628px;top:301px;width:1px;height:259px;background:#f3f3f3;"></div>
<div class="b" style="left:619px;top:237px;width:1px;height:386px;background:#cbcbcb;"></div>
<div class="b" style="left:1672px;top:237px;width:1px;height:386px;background:#cbcbcb;"></div>
<div class="b" style="left:479px;top:300px;width:1194px;height:1px;background:#cbcbcb;"></div>
<div class="b" style="left:479px;top:560px;width:1194px;height:1px;background:#cbcbcb;"></div>
<div class="t" style="top:244.5px;line-height:20px;font-size:15px;color:#333;letter-spacing:-0.07px;left:945.37px;width:400px;text-align:center;">Sales</div>
<div class="t" style="top:595.5px;line-height:20px;font-size:15px;color:#333;letter-spacing:0.21px;left:945.71px;width:400px;text-align:center;">Budget Sales</div>
<div class="t" style="top:279.5px;line-height:20px;font-size:14.5px;color:#333;font-weight:bold;letter-spacing:0.03px;right:1306.47px;">Product</div>
<div class="t" style="top:272.5px;line-height:20px;font-size:15.6px;color:#7c7c7c;letter-spacing:-0.89px;left:621.5px;">0K</div>
<div class="t" style="top:272.5px;line-height:20px;font-size:15.6px;color:#7c7c7c;letter-spacing:-0.38px;left:501.03px;width:400px;text-align:center;">10K</div>
<div class="t" style="top:272.5px;line-height:20px;font-size:15.6px;color:#7c7c7c;letter-spacing:-0.38px;left:582.75px;width:400px;text-align:center;">20K</div>
<div class="t" style="top:272.5px;line-height:20px;font-size:15.6px;color:#7c7c7c;letter-spacing:-0.38px;left:664.47px;width:400px;text-align:center;">30K</div>
<div class="t" style="top:272.5px;line-height:20px;font-size:15.6px;color:#7c7c7c;letter-spacing:-0.38px;left:746.19px;width:400px;text-align:center;">40K</div>
<div class="t" style="top:272.5px;line-height:20px;font-size:15.6px;color:#7c7c7c;letter-spacing:-0.38px;left:827.91px;width:400px;text-align:center;">50K</div>
<div class="t" style="top:272.5px;line-height:20px;font-size:15.6px;color:#7c7c7c;letter-spacing:-0.38px;left:909.63px;width:400px;text-align:center;">60K</div>
<div class="t" style="top:272.5px;line-height:20px;font-size:15.6px;color:#7c7c7c;letter-spacing:-0.38px;left:991.35px;width:400px;text-align:center;">70K</div>
<div class="t" style="top:272.5px;line-height:20px;font-size:15.6px;color:#7c7c7c;letter-spacing:-0.38px;left:1073.07px;width:400px;text-align:center;">80K</div>
<div class="t" style="top:272.5px;line-height:20px;font-size:15.6px;color:#7c7c7c;letter-spacing:-0.38px;left:1154.79px;width:400px;text-align:center;">90K</div>
<div class="t" style="top:272.5px;line-height:20px;font-size:15.6px;color:#7c7c7c;letter-spacing:-0.11px;left:1236.65px;width:400px;text-align:center;">100K</div>
<div class="t" style="top:272.5px;line-height:20px;font-size:15.6px;color:#7c7c7c;letter-spacing:0.18px;left:1318.51px;width:400px;text-align:center;">110K</div>
<div class="t" style="top:272.5px;line-height:20px;font-size:15.6px;color:#7c7c7c;letter-spacing:-0.11px;left:1400.09px;width:400px;text-align:center;">120K</div>
<div class="t" style="top:567.5px;line-height:20px;font-size:15.6px;color:#7c7c7c;letter-spacing:-0.89px;left:621.5px;">0K</div>
<div class="t" style="top:567.5px;line-height:20px;font-size:15.6px;color:#7c7c7c;letter-spacing:-0.38px;left:497.29px;width:400px;text-align:center;">10K</div>
<div class="t" style="top:567.5px;line-height:20px;font-size:15.6px;color:#7c7c7c;letter-spacing:-0.38px;left:574.87px;width:400px;text-align:center;">20K</div>
<div class="t" style="top:567.5px;line-height:20px;font-size:15.6px;color:#7c7c7c;letter-spacing:-0.38px;left:652.45px;width:400px;text-align:center;">30K</div>
<div class="t" style="top:567.5px;line-height:20px;font-size:15.6px;color:#7c7c7c;letter-spacing:-0.38px;left:730.03px;width:400px;text-align:center;">40K</div>
<div class="t" style="top:567.5px;line-height:20px;font-size:15.6px;color:#7c7c7c;letter-spacing:-0.38px;left:807.61px;width:400px;text-align:center;">50K</div>
<div class="t" style="top:567.5px;line-height:20px;font-size:15.6px;color:#7c7c7c;letter-spacing:-0.38px;left:885.19px;width:400px;text-align:center;">60K</div>
<div class="t" style="top:567.5px;line-height:20px;font-size:15.6px;color:#7c7c7c;letter-spacing:-0.38px;left:962.77px;width:400px;text-align:center;">70K</div>
<div class="t" style="top:567.5px;line-height:20px;font-size:15.6px;color:#7c7c7c;letter-spacing:-0.38px;left:1040.35px;width:400px;text-align:center;">80K</div>
<div class="t" style="top:567.5px;line-height:20px;font-size:15.6px;color:#7c7c7c;letter-spacing:-0.38px;left:1117.93px;width:400px;text-align:center;">90K</div>
<div class="t" style="top:567.5px;line-height:20px;font-size:15.6px;color:#7c7c7c;letter-spacing:-0.11px;left:1195.65px;width:400px;text-align:center;">100K</div>
<div class="t" style="top:567.5px;line-height:20px;font-size:15.6px;color:#7c7c7c;letter-spacing:0.18px;left:1273.37px;width:400px;text-align:center;">110K</div>
<div class="t" style="top:567.5px;line-height:20px;font-size:15.6px;color:#7c7c7c;letter-spacing:-0.11px;left:1350.81px;width:400px;text-align:center;">120K</div>
<div class="t" style="top:567.5px;line-height:20px;font-size:15.6px;color:#7c7c7c;letter-spacing:-0.11px;left:1428.39px;width:400px;text-align:center;">130K</div>
<div class="b" style="left:620px;top:303px;width:214px;height:15px;background:#f28e2b;"></div>
<div class="t" style="top:300.5px;line-height:20px;font-size:15.5px;color:#747474;letter-spacing:0.51px;right:1305.99px;">Amaretto</div>
<div class="b" style="left:620px;top:323px;width:293px;height:15px;background:#f28e2b;"></div>
<div class="t" style="top:320.5px;line-height:20px;font-size:15.5px;color:#747474;letter-spacing:0.18px;right:1306.32px;">Caffe Latte</div>
<div class="b" style="left:620px;top:343px;width:645px;height:15px;background:#f28e2b;"></div>
<div class="t" style="top:340.5px;line-height:20px;font-size:15.5px;color:#747474;letter-spacing:-0.07px;right:1306.57px;">Caffe Mocha</div>
<div class="b" style="left:620px;top:363px;width:599px;height:15px;background:#f28e2b;"></div>
<div class="t" style="top:360.5px;line-height:20px;font-size:15.5px;color:#747474;letter-spacing:-0.1px;right:1306.6px;">Chamomile</div>
<div class="b" style="left:620px;top:383px;width:1002px;height:15px;background:#f28e2b;"></div>
<div class="t" style="top:380.5px;line-height:20px;font-size:15.5px;color:#747474;letter-spacing:-0.07px;right:1306.57px;">Colombian</div>
<div class="b" style="left:620px;top:403px;width:580px;height:15px;background:#f28e2b;"></div>
<div class="t" style="top:400.5px;line-height:20px;font-size:15.5px;color:#747474;letter-spacing:0.22px;right:1306.28px;">Darjeeling</div>
<div class="b" style="left:620px;top:423px;width:598px;height:15px;background:#f28e2b;"></div>
<div class="t" style="top:420.5px;line-height:20px;font-size:15.5px;color:#747474;letter-spacing:-0.17px;right:1306.67px;">Decaf Espresso</div>
<div class="b" style="left:620px;top:443px;width:476px;height:15px;background:#4e79a7;"></div>
<div class="b" style="left:620px;top:443px;width:457px;height:15px;background:#f28e2b;"></div>
<div class="t" style="top:440.5px;line-height:20px;font-size:15.5px;color:#747474;letter-spacing:-0.08px;right:1306.58px;">Decaf Irish Cream</div>
<div class="b" style="left:620px;top:463px;width:545px;height:15px;background:#f28e2b;"></div>
<div class="t" style="top:460.5px;line-height:20px;font-size:15.5px;color:#747474;letter-spacing:-0.14px;right:1306.64px;">Earl Grey</div>
<div class="b" style="left:620px;top:483px;width:244px;height:15px;background:#f28e2b;"></div>
<div class="t" style="top:480.5px;line-height:20px;font-size:15.5px;color:#747474;letter-spacing:-0.21px;right:1306.71px;">Green Tea</div>
<div class="b" style="left:620px;top:503px;width:756px;height:15px;background:#f28e2b;"></div>
<div class="t" style="top:500.5px;line-height:20px;font-size:15.5px;color:#747474;letter-spacing:-0.32px;right:1306.82px;">Lemon</div>
<div class="b" style="left:620px;top:523px;width:257px;height:15px;background:#f28e2b;"></div>
<div class="t" style="top:520.5px;line-height:20px;font-size:15.5px;color:#747474;letter-spacing:0.8px;right:1305.7px;">Mint</div>
<div class="b" style="left:620px;top:543px;width:196px;height:15px;background:#f28e2b;"></div>
<div class="t" style="top:540.5px;line-height:20px;font-size:15.5px;color:#747474;letter-spacing:-0.09px;right:1306.59px;">Regular Espresso</div>
<div class="b" style="left:1689px;top:181px;width:194px;height:80px;background:#fff;border:1px solid #d4d4d4;"></div>
<div class="b" style="left:1690px;top:182px;width:192px;height:34px;background:#f7f7f7;"></div>
<div class="t" style="top:190px;line-height:20px;font-size:15px;color:#4a4a4a;letter-spacing:0.05px;left:1697.5px;">Measure Names</div>
<div class="b" style="left:1693px;top:220px;width:14px;height:14px;background:#4e79a7;"></div>
<div class="t" style="top:217.5px;line-height:20px;font-size:15px;color:#4a4a4a;letter-spacing:0.18px;left:1712.5px;">Budget Sales</div>
<div class="b" style="left:1693px;top:241px;width:14px;height:14px;background:#f28e2b;"></div>
<div class="t" style="top:238.5px;line-height:20px;font-size:15px;color:#4a4a4a;letter-spacing:-0.11px;left:1712.5px;">Sales</div>
<div class="b" style="left:0px;top:967px;width:1920px;height:38px;background:#e6e6e6;border-top:1px solid #d0d0d0;border-bottom:1px solid #d0d0d0;"></div>
<svg class="b" style="left:11px;top:980.5px;" width="8" height="10" viewBox="0 0 8 10"><rect x="0.6" y="0.6" width="6.8" height="8.8" rx="2" stroke="#777" stroke-width="1.1" fill="none"/><path d="M0.6 2.8c2 1 4.8 1 6.8 0" stroke="#777" stroke-width="1" fill="none"/></svg>
<div class="t" style="top:976.5px;line-height:20px;font-size:15.5px;color:#777;letter-spacing:-0.22px;left:25.5px;">Data Source</div>
<div class="b" style="left:162px;top:968px;width:70px;height:37px;background:#fbfbfb;border-left:1px solid #d0d0d0;border-right:1px solid #d0d0d0;"></div>
<div class="t" style="top:976px;line-height:20px;font-size:15.5px;color:#555;font-weight:bold;letter-spacing:-0.53px;left:170.5px;">Sheet 1</div>
<div class="b" style="left:263px;top:968px;width:1px;height:36px;background:#d4d4d4;"></div>
<div class="b" style="left:295px;top:968px;width:1px;height:36px;background:#d4d4d4;"></div>
<div class="b" style="left:327px;top:968px;width:1px;height:36px;background:#d4d4d4;"></div>
<svg class="b" style="left:241px;top:979px;" width="16" height="15" viewBox="0 0 16 15"><path d="M10.4 5.2V0.9H0.6V10.2H6.2" stroke="#666" stroke-width="1.15" fill="none"/><path d="M3.4 8v-2M5.6 8v-4.6M7.8 8v-4" stroke="#666" stroke-width="1"/><path d="M11 7.1v7.8M7.1 11h7.8" stroke="#555" stroke-width="1.9"/></svg>
<svg class="b" style="left:273px;top:979px;" width="16" height="15" viewBox="0 0 16 15"><path d="M10.4 5.2V0.9H0.6V10.2H6.2M5.6 0.9v9.3M0.6 5h9.8" stroke="#666" stroke-width="1.15" fill="none"/><path d="M11 7.1v7.8M7.1 11h7.8" stroke="#555" stroke-width="1.9"/></svg>
<svg class="b" style="left:305px;top:979px;" width="16" height="15" viewBox="0 0 16 15"><path d="M10.4 5.2V0.7L5.4 2.9L0.6 0.7V9.8L5.4 11.2V2.9" stroke="#666" stroke-width="1.15" fill="none" stroke-linejoin="round"/><path d="M11 7.1v7.8M7.1 11h7.8" stroke="#555" stroke-width="1.9"/></svg>
<div class="b" style="left:0px;top:1005px;width:1920px;height:25px;background:#ececec;"></div>
<div class="t" style="top:1007.5px;line-height:20px;font-size:13.5px;color:#333;left:3.5px;">26 marks</div>
<div class="t" style="top:1007.5px;line-height:20px;font-size:13.5px;color:#333;letter-spacing:-0.28px;left:79px;">13 rows by 1 column</div>
<div class="t" style="top:1007.5px;line-height:20px;font-size:13.5px;color:#333;letter-spacing:-0.17px;left:219px;">SUM(Budget Sales): 713,460</div>
<div class="b" style="left:1501px;top:1005px;width:1px;height:25px;background:#d4d4d4;"></div>
<div class="b" style="left:1657.5px;top:1005px;width:1px;height:25px;background:#d4d4d4;"></div>
<div class="b" style="left:1690px;top:1005px;width:1px;height:25px;background:#d4d4d4;"></div>
<div class="b" style="left:1722px;top:1005px;width:1px;height:25px;background:#d4d4d4;"></div>
<div class="b" style="left:1779px;top:1005px;width:1px;height:25px;background:#d4d4d4;"></div>
<div class="b" style="left:1850px;top:1005px;width:1px;height:25px;background:#d4d4d4;"></div>
<svg class="b" style="left:1508px;top:1010px;" width="10" height="13" viewBox="0 0 10 13"><ellipse cx="5.1" cy="2.7" rx="1.7" ry="2.3" stroke="#666" stroke-width="1" fill="none"/><path d="M0.6 12.4v-3a2.6 2.6 0 0 1 2.6-2.6h3.6a2.6 2.6 0 0 1 2.6 2.6v3z" stroke="#666" stroke-width="1" fill="none"/></svg>
<div class="t" style="top:1007.5px;line-height:20px;font-size:13.5px;color:#333;left:1528px;">emma.marler</div>
<svg class="b" style="left:1640.5px;top:1015px;" width="8" height="4.5" viewBox="0 0 8 4.5"><path d="M0 0h8l-4 4.5z" fill="#111"/></svg>
<svg class="b" style="left:1787px;top:1012.5px;" width="8" height="9" viewBox="0 0 8 9"><path d="M0.6 0v9" stroke="#b0b0b0" stroke-width="1.2"/><path d="M7 0.5v8L2 4.5z" fill="#b0b0b0"/></svg>
<svg class="b" style="left:1805px;top:1013px;" width="5" height="8" viewBox="0 0 5 8"><path d="M5 0v8L0 4z" fill="#b0b0b0"/></svg>
<svg class="b" style="left:1821px;top:1013px;" width="5" height="8" viewBox="0 0 5 8"><path d="M0 0v8L5 4z" fill="#b0b0b0"/></svg>
<svg class="b" style="left:1835px;top:1012.5px;" width="8" height="9" viewBox="0 0 8 9"><path d="M7.4 0v9" stroke="#b0b0b0" stroke-width="1.2"/><path d="M1 0.5v8L6 4.5z" fill="#b0b0b0"/></svg>
<svg class="b" style="left:1858.5px;top:1011px;" width="12" height="12" viewBox="0 0 12 12"><rect x="0.0" y="0.0" width="3" height="3" fill="#b8b8b8"/><rect x="0.0" y="4.2" width="3" height="3" fill="#b8b8b8"/><rect x="0.0" y="8.4" width="3" height="3" fill="#b8b8b8"/><rect x="4.2" y="0.0" width="3" height="3" fill="#b8b8b8"/><rect x="4.2" y="4.2" width="3" height="3" fill="#b8b8b8"/><rect x="4.2" y="8.4" width="3" height="3" fill="#b8b8b8"/><rect x="8.4" y="0.0" width="3" height="3" fill="#b8b8b8"/><rect x="8.4" y="4.2" width="3" height="3" fill="#b8b8b8"/><rect x="8.4" y="8.4" width="3" height="3" fill="#b8b8b8"/></svg>
<svg class="b" style="left:1881px;top:1011px;" width="12" height="12" viewBox="0 0 12 12"><rect x="0" y="0" width="11.4" height="7" fill="#b8b8b8"/><rect x="0.0" y="8.4" width="3" height="3" fill="#b8b8b8"/><rect x="4.2" y="8.4" width="3" height="3" fill="#b8b8b8"/><rect x="8.4" y="8.4" width="3" height="3" fill="#b8b8b8"/></svg>
<svg class="b" style="left:1903px;top:1011px;" width="11" height="11" viewBox="0 0 11 11"><rect x="0" y="0" width="11" height="11" fill="#666"/></svg>
<div class="b" style="left:1919px;top:472px;width:1px;height:17px;background:#111;"></div>
</body></html>
